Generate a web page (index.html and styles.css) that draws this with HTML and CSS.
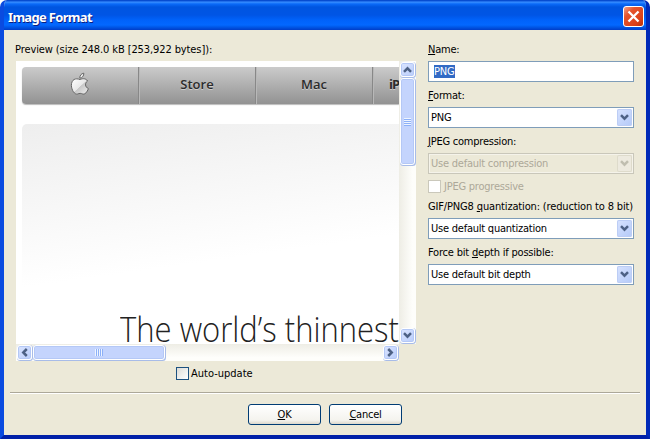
FILE: index.html
```html
<!DOCTYPE html>
<html lang="en">
<head>
<meta charset="utf-8">
<title>Image Format</title>
<link rel="stylesheet" href="styles.css">
</head>
<body>
<svg width="0" height="0" class="defs">
  <symbol id="chev" viewBox="0 0 9 7"><path d="M1 1.2 L4.5 4.7 L8 1.2" fill="none" stroke="currentColor" stroke-width="2.5"/></symbol>
</svg>
<div class="window">
  <header class="titlebar">
    <h1 class="title">Image Format</h1>
    <button class="close" aria-label="Close"><svg width="13" height="13" viewBox="0 0 13 13"><path d="M1.5 1.5 L11.5 11.5 M11.5 1.5 L1.5 11.5" stroke="#fff" stroke-width="2.3"/></svg></button>
  </header>
  <main class="content">
    <section class="left">
      <div class="label"><span class="t-preview">Preview (size 248.0 kB [253,922 bytes]):</span></div>
      <div class="preview">
        <div class="view">
          <nav class="nav">
            <div class="tab">
              <svg width="20" height="24" viewBox="0 0 20 24">
                <defs><linearGradient id="ap" x1="0" y1="0" x2="1" y2="1"><stop offset="0" stop-color="#fff"/><stop offset=".5" stop-color="#e8e8e8"/><stop offset=".52" stop-color="#c8c8c8"/><stop offset="1" stop-color="#eee"/></linearGradient></defs>
                <path d="M10 7.6 C12 6.6 15.5 5.8 17.6 9 C14.6 11 14.8 15 18.4 16.6 C17 20.3 15 22.6 12.8 22 C11 21.2 9.3 21.2 7.6 22 C4.6 23 1.5 18 1.4 13.4 C1.4 7.5 5.6 5.6 10 7.6 Z" fill="url(#ap)" stroke="#666"/>
                <path d="M9.8 6.2 C9.6 3.6 11.4 1.4 13.8 1.2 C14 3.8 12.2 6 9.8 6.2 Z" fill="#eee" stroke="#666"/>
              </svg>
            </div>
            <div class="tab">Store</div>
            <div class="tab">Mac</div>
            <div class="tab last">iP</div>
          </nav>
          <div class="hero"><span class="headline">The world’s thinnest</span></div>
        </div>
        <div class="vbar">
          <div class="sbtn"><svg class="up" width="9" height="7"><use href="#chev"/></svg></div>
          <div class="thumb vthumb"><i class="grip"></i></div>
          <div class="track"></div>
          <div class="sbtn"><svg width="9" height="7"><use href="#chev"/></svg></div>
        </div>
        <div class="hbar">
          <div class="sbtn"><svg class="lf" width="9" height="7"><use href="#chev"/></svg></div>
          <div class="thumb hthumb"><i class="grip gv"></i></div>
          <div class="track"></div>
          <div class="sbtn"><svg class="rt" width="9" height="7"><use href="#chev"/></svg></div>
        </div>
      </div>
      <div class="check auto"><i class="box"></i><span class="t-auto">Auto-update</span></div>
    </section>
    <section class="right">
      <div class="label"><span class="t-name"><u>N</u>ame:</span></div>
      <div class="field input"><span class="sel">PNG</span></div>
      <div class="label"><span class="t-format"><u>F</u>ormat:</span></div>
      <div class="field"><span class="t-png">PNG</span><b class="drop"><svg width="9" height="7"><use href="#chev"/></svg></b></div>
      <div class="label"><span class="t-jpeg"><u>J</u>PEG compression:</span></div>
      <div class="field off"><span class="t-comp">Use default compression</span><b class="drop"><svg width="9" height="7"><use href="#chev"/></svg></b></div>
      <div class="check off"><i class="box"></i><span class="t-prog">JPEG progressive</span></div>
      <div class="label"><span class="t-gif">GIF/PNG8 <u>q</u>uantization: (reduction to 8 bit)</span></div>
      <div class="field"><span class="t-quant">Use default quantization</span><b class="drop"><svg width="9" height="7"><use href="#chev"/></svg></b></div>
      <div class="label"><span class="t-force">Force bit <u>d</u>epth if possible:</span></div>
      <div class="field"><span class="t-depth">Use default bit depth</span><b class="drop"><svg width="9" height="7"><use href="#chev"/></svg></b></div>
    </section>
  </main>
  <footer class="footer">
    <button class="btn"><span><u>O</u>K</span></button>
    <button class="btn"><span><u>C</u>ancel</span></button>
  </footer>
</div>
</body>
</html>
```
FILE: styles.css
```css
* { box-sizing: border-box; }
body {
  margin: 0;
  background: #fff;
  font: 11px/12px "DejaVu Sans Condensed", "DejaVu Sans", sans-serif;
  font-stretch: condensed;
  letter-spacing: -0.23px;
  color: #000;
  overflow: hidden;
}
.defs { position: absolute; }
button { font: inherit; letter-spacing: inherit; color: inherit; padding: 0; }
.label span, .field span, .check span { white-space: nowrap; }
.t-preview { letter-spacing: -0.1px; }
.t-gif { letter-spacing: -0.15px; }
.t-force { letter-spacing: -0.2px; }
u { text-underline-offset: 1px; text-decoration-thickness: 1px; }

.window {
  width: 650px;
  height: 439px;
  background: #ece9d8;
  border: solid #0a4be0;
  border-width: 0 4px 4px;
  border-color: #0a4be0 #0029b8 #0020a8 #0a4be0;
  border-radius: 7px 7px 0 0;
  display: flex;
  flex-direction: column;
  overflow: hidden;
}
.titlebar {
  height: 30px;
  margin: 0 -4px;
  flex: none;
  padding: 3px 6px 0 8px;
  display: flex;
  align-items: center;
  justify-content: space-between;
  background: linear-gradient(#0448c8 0, #0a50d8 1px, #3a90ff 2px, #0a6af8 4px, #0055e0 7px, #0055e5 15px, #0062fa 20px, #0368ff 25px, #0058e8 27px, #003dc8 30px);
}
.title {
  margin: 0;
  font: bold 13px/16px "Noto Sans", sans-serif;
  letter-spacing: -0.68px;
  color: #fff;
  text-shadow: 1px 1px #0a1f80;
}
.close {
  width: 21px;
  height: 21px;
  border: 1px solid #fff;
  border-radius: 3px;
  background: linear-gradient(135deg, #f0a088 0, #e5532c 30%, #dc4018 75%, #b83008);
  display: grid;
  place-items: center;
}
.content {
  flex: 1;
  display: flex;
  gap: 12px;
  padding: 13px 12px 0;
}
.left { width: 400px; }
.right { width: 206px; }
.label { height: 12px; line-height: 14px; margin-bottom: 6px; }
.left .label { margin-left: -1px; }

.preview {
  display: grid;
  grid-template-columns: 383px 17px;
  grid-template-rows: 283px 17px;
}
.view { background: #fff; overflow: hidden; padding: 6px 0 0 6px; }
.nav {
  height: 37px;
  width: 377px;
  display: flex;
  border-radius: 4px 0 0 4px;
  background: linear-gradient(#cbcbcb, #929292);
  box-shadow: 0 1px 1px #bbb;
}
.tab {
  width: 117px;
  flex: none;
  display: flex;
  align-items: center;
  justify-content: center;
  border-right: 1px solid #888;
  box-shadow: 1px 0 #b8b8b8;
  font: 600 13px/16px "Open Sans", sans-serif;
  letter-spacing: 0;
  color: #2c2c2c;
  text-shadow: 0 1px #ccc;
  padding-bottom: 3px;
}
.tab.last { width: 26px; border: 0; box-shadow: none; justify-content: flex-start; padding-left: 16px; letter-spacing: -1px; font-weight: 700; }
.hero {
  margin-top: 20px;
  height: 220px;
  width: 377px;
  border-radius: 5px 0 0 0;
  background: linear-gradient(172deg, #eee 0, #f5f5f5 25%, #fff 60%);
  padding: 182px 0 0 98px;
}
.headline {
  display: inline-block;
  white-space: nowrap;
  transform-origin: left;
  transform: scaleX(.886);
  font: 300 35px/46px "Open Sans", sans-serif;
  letter-spacing: 0;
  color: #222;
}
.vbar { display: flex; flex-direction: column; background: linear-gradient(90deg, #eeede5, #fefefb 80%); }
.hbar { display: flex; background: linear-gradient(#eeede5, #fefefb 80%); }
.track { flex: 1; }
.sbtn, .thumb {
  border: 1px solid #fff;
  border-radius: 3px;
  box-shadow: inset 0 0 0 1px #b4c8f6, 0.5px 0.5px 0 0.5px #a8bce8;
  background: linear-gradient(135deg, #dbe5ff, #b9cdfb);
  color: #4d6185;
  display: grid;
  place-items: center;
  flex: none;
}
.sbtn { width: 15px; height: 15px; margin: 1px; }
.thumb { background: #c4d4fd; }
.vthumb { width: 15px; height: 87px; margin: 0 1px; }
.hthumb { height: 15px; width: 132px; margin: 1px 0; }
.grip { width: 7px; height: 8px; background: repeating-linear-gradient(#eef4fe 0 1px, #8cb0f8 1px 2px); }
.grip.gv { width: 8px; height: 7px; background: repeating-linear-gradient(90deg, #eef4fe 0 1px, #8cb0f8 1px 2px); }
.up { transform: rotate(180deg); }
.lf { transform: rotate(90deg); }
.rt { transform: rotate(-90deg); }

.field {
  height: 21px;
  border: 1px solid #7f9db9;
  background: #fff;
  display: flex;
  align-items: center;
  justify-content: space-between;
  padding: 0 1px 0 2px;
  margin-bottom: 7px;
}
.field > span { line-height: 14px; padding-top: 1px; }
.input { padding-left: 5px; }
.input > .sel { background: #316ac5; color: #fff; line-height: 13px; padding: 0 1px 0 0; }
.drop {
  width: 15px;
  height: 17px;
  border-radius: 2px;
  background: linear-gradient(135deg, #d8e3ff, #b3c9f8);
  box-shadow: inset 0 0 0 1px #bccdf5;
  color: #4d6185;
  display: grid;
  place-items: center;
}
.field.off { background: #ece9d8; border-color: #c9c7ba; color: #aca899; margin-bottom: 6px; box-shadow: inset 0 0 0 1px #f5f3ea; }
.off .drop { background: #edeadf; box-shadow: inset 0 0 0 1px #dedbcb; color: #c0beb0; }
.check { height: 13px; line-height: 14px; display: flex; align-items: center; gap: 3px; margin-bottom: 7px; }
.check span { padding-top: 1px; }
.check.off { color: #aca899; }
.box { width: 13px; height: 13px; border: 1px solid #1c5180; background: linear-gradient(135deg, #dcdcd7, #fff); }
.off .box { border-color: #cac8bb; background: #fff; }
.auto { margin: 6px 0 0 160px; gap: 2px; letter-spacing: 0; }

.footer {
  height: 43px;
  margin: 0 6px;
  flex: none;
  border-top: 1px solid #aca899;
  box-shadow: inset 0 1px #fff;
  display: flex;
  gap: 8px;
  padding: 11px 0 0 238px;
}
.btn {
  width: 73px;
  height: 21px;
  border: 1px solid #003c74;
  border-radius: 3px;
  background: linear-gradient(#fff, #f4f3ee 80%, #dcd8cc);
}
.btn span { display: block; padding-top: 1px; }
```
